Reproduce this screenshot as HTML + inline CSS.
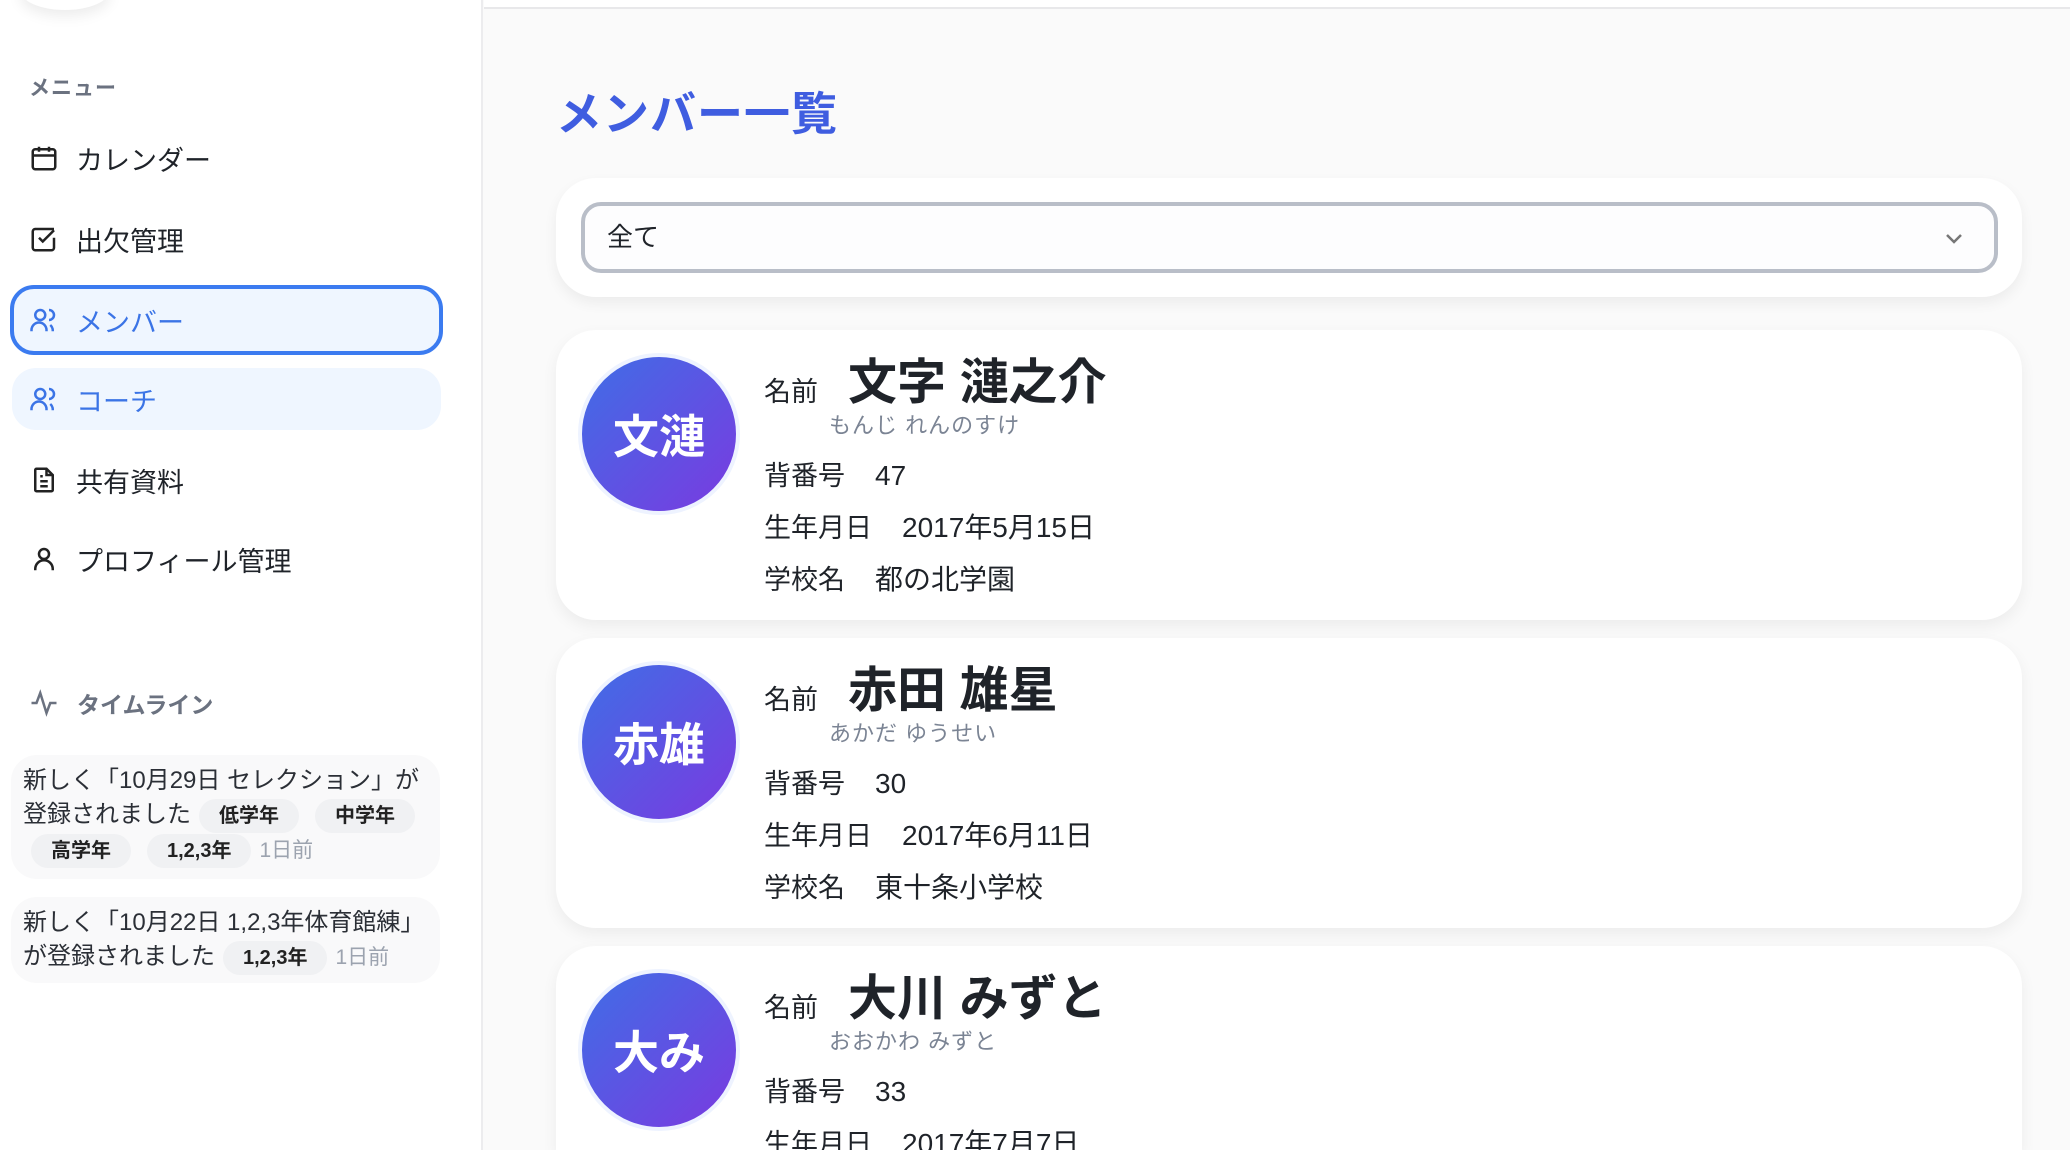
<!DOCTYPE html>
<html style="height:1150px;overflow:hidden"><head><meta charset="utf-8"><style>
*{box-sizing:border-box;margin:0;padding:0}
body{width:2070px;height:1150px;overflow:hidden;background:#fafafa;font-family:"Liberation Sans","Noto Sans CJK JP",sans-serif;color:#1f2329;position:relative}
.side{position:absolute;left:0;top:0;width:483px;height:1150px;background:#fff;border-right:2px solid #ececee}
.blob{position:absolute;left:20px;top:-30px;width:90px;height:40px;border-radius:50%;box-shadow:0 6px 14px rgba(0,0,0,.08)}
.lbl{position:absolute;left:29px;top:72px;font-size:21px;font-weight:bold;color:#6b7280;letter-spacing:1px}
.item{position:absolute;left:10px;width:433px;height:68px;display:flex;align-items:center;font-size:27px;color:#1f2329}
.item svg{position:absolute;left:19px;width:30px;height:30px}
.item span{position:absolute;left:66px}
.sel{border:4px solid #3b7bf0;background:#eff6ff;border-radius:24px;color:#3b74e6}
.sel svg{left:15px}.sel span{left:62px}
.coach{background:#eff6ff;border-radius:24px;color:#3b74e6;left:12px;width:429px;height:62px}
.coach svg{left:17px}.coach span{left:64px}
.tl{position:absolute;left:29px;top:686px;font-size:23px;font-weight:bold;color:#6b7280;display:flex;align-items:center}
.tc{position:absolute;left:11px;width:429px;background:#f9f9fa;border-radius:26px;padding:9px 12px;font-size:24px;line-height:34px;color:#2b2f36}
.tag{display:inline-block;background:#f0f1f3;border-radius:18px;padding:0 20px;font-weight:bold;font-size:20px;line-height:34px;margin:0 8px;color:#222}
.ago{color:#9ca3af;font-size:21px}
.top{position:absolute;left:484px;top:0;right:0;height:9px;border-bottom:2px solid #e8e8ea;background:#fff}
h1{position:absolute;left:556px;top:78px;font-size:46px;font-weight:bold;color:#3f5de0;letter-spacing:1px}
.fc{position:absolute;left:556px;top:178px;width:1466px;height:119px;background:#fff;border-radius:40px;box-shadow:0 6px 14px rgba(0,0,0,.06)}
.selbox{position:absolute;left:25px;top:24px;width:1417px;height:71px;border:4px solid #b9bec8;border-radius:20px;background:#fdfdfe;font-size:26px;padding-left:22px;line-height:63px}
.chev{position:absolute;right:28px;top:20px}
.card{position:absolute;left:556px;width:1466px;height:290px;background:#fff;border-radius:40px;box-shadow:0 6px 16px rgba(0,0,0,.06)}
.av{position:absolute;left:22px;top:23px;width:162px;height:162px;border-radius:50%;border:4px solid #eef3ff;background:linear-gradient(135deg,#3f6ee6,#7a3ae0);color:#fff;font-size:46px;font-weight:bold;display:flex;align-items:center;justify-content:center}
.f{position:absolute;left:208px;font-size:27px;white-space:nowrap}
.f b{font-weight:normal;margin-left:30px;font-size:28px}
.nm{position:absolute;left:292px;top:13px;font-size:49px;font-weight:bold}
.fu{position:absolute;left:273px;top:78px;font-size:22px;color:#7b8494;letter-spacing:1px}
</style></head><body>
<div class="side">
<div class="blob"></div>
<div class="lbl">メニュー</div>
<div class="item" style="top:124px"><svg viewBox="0 0 24 24" fill="none" stroke="#222" stroke-width="2"><rect x="3" y="5" width="18" height="16" rx="2"/><path d="M3 10h18M8 3v4M16 3v4"/></svg><span>カレンダー</span></div>
<div class="item" style="top:205px"><svg viewBox="0 0 24 24" fill="none" stroke="#222" stroke-width="2"><path d="M20 4H5a2 2 0 0 0-2 2v13a2 2 0 0 0 2 2h13a2 2 0 0 0 2-2v-8"/><path d="M8 11l3 3 9-9"/></svg><span>出欠管理</span></div>
<div class="item sel" style="top:285px;height:70px"><svg viewBox="0 0 24 24" fill="none" stroke="#3b74e6" stroke-width="2"><circle cx="9" cy="8" r="4"/><path d="M2 21v-1a6 6 0 0 1 12 0v1M16 4a4 4 0 0 1 0 8M19 21v-1a6 6 0 0 0-2-4"/></svg><span>メンバー</span></div>
<div class="item coach" style="top:368px"><svg viewBox="0 0 24 24" fill="none" stroke="#3b74e6" stroke-width="2"><circle cx="9" cy="8" r="4"/><path d="M2 21v-1a6 6 0 0 1 12 0v1M16 4a4 4 0 0 1 0 8M19 21v-1a6 6 0 0 0-2-4"/></svg><span>コーチ</span></div>
<div class="item" style="top:446px"><svg viewBox="0 0 24 24" fill="none" stroke="#222" stroke-width="2"><path d="M14 3H6a1 1 0 0 0-1 1v16a1 1 0 0 0 1 1h12a1 1 0 0 0 1-1V8z"/><path d="M14 3v5h5M9 13h6M9 17h6M9 9h2"/></svg><span>共有資料</span></div>
<div class="item" style="top:525px"><svg viewBox="0 0 24 24" fill="none" stroke="#222" stroke-width="2"><circle cx="12" cy="8" r="4"/><path d="M5 21v-1a7 7 0 0 1 14 0v1"/></svg><span>プロフィール管理</span></div>
<div class="tl"><svg width="30" height="30" viewBox="0 0 24 24" fill="none" stroke="#6b7280" stroke-width="2"><path d="M2 12h4l3-8 5 16 3-8h5"/></svg><span style="margin-left:18px">タイムライン</span></div>
<div class="tc" style="top:755px;height:124px">新しく「10月29日 セレクション」が<br>登録されました<span class="tag">低学年</span><span class="tag">中学年</span><br><span class="tag">高学年</span><span class="tag">1,2,3年</span><span class="ago">1日前</span></div>
<div class="tc" style="top:897px;height:86px">新しく「10月22日 1,2,3年体育館練」<br>が登録されました<span class="tag">1,2,3年</span><span class="ago">1日前</span></div>
</div>
<div class="top"></div>
<h1>メンバー一覧</h1>
<div class="fc"><div class="selbox">全て<svg class="chev" width="24" height="24" viewBox="0 0 24 24" fill="none" stroke="#777" stroke-width="2.5"><path d="M5 9l7 7 7-7"/></svg></div></div>

<div class="card" style="top:330px"><div class="av">文漣</div><div class="f" style="top:40px">名前</div><div class="nm">文字 漣之介</div><div class="fu">もんじ れんのすけ</div><div class="f" style="top:124px">背番号<b>47</b></div><div class="f" style="top:176px">生年月日<b>2017年5月15日</b></div><div class="f" style="top:228px">学校名<b>都の北学園</b></div></div>
<div class="card" style="top:638px"><div class="av">赤雄</div><div class="f" style="top:40px">名前</div><div class="nm">赤田 雄星</div><div class="fu">あかだ ゆうせい</div><div class="f" style="top:124px">背番号<b>30</b></div><div class="f" style="top:176px">生年月日<b>2017年6月11日</b></div><div class="f" style="top:228px">学校名<b>東十条小学校</b></div></div>
<div class="card" style="top:946px;height:204px;border-radius:40px 40px 0 0"><div class="av">大み</div><div class="f" style="top:40px">名前</div><div class="nm">大川 みずと</div><div class="fu">おおかわ みずと</div><div class="f" style="top:124px">背番号<b>33</b></div><div class="f" style="top:176px">生年月日<b>2017年7月7日</b></div></div>
</body></html>
